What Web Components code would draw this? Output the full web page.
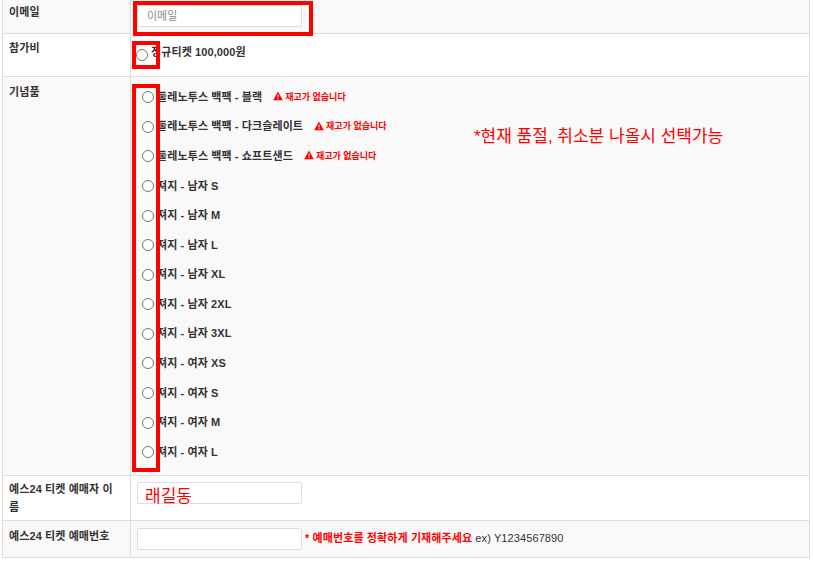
<!DOCTYPE html>
<html lang="ko">
<head>
<meta charset="utf-8">
<title>구매 정보</title>
<style>
  html, body { margin: 0; background: #fff; }
  body {
    font-family: "Liberation Sans", "Noto Sans CJK KR", sans-serif;
    font-size: 11px;
    color: #333;
  }
</style>
</head>
<body>
<order-form>
  <form-row label="이메일" shade style="--h:33px; --lt:3px; --pad:5px 0 0 6px">
    <text-box placeholder="이메일"></text-box>
  </form-row>
  <form-row label="참가비" style="--h:42px; --lt:5px; --pad:2px 0 0 5px; --drop:8px">
    <radio-line>정규티켓 100,000원</radio-line>
  </form-row>
  <form-row label="기념품" shade style="--h:398px; --lt:6px; --pad:4px 0 0 11px">
    <radio-line soldout>둘레노투스 백팩 - 블랙</radio-line>
    <radio-line soldout>둘레노투스 백팩 - 다크슬레이트</radio-line>
    <radio-line soldout>둘레노투스 백팩 - 쇼프트샌드</radio-line>
    <radio-line>져지 - 남자 S</radio-line>
    <radio-line>져지 - 남자 M</radio-line>
    <radio-line>져지 - 남자 L</radio-line>
    <radio-line>져지 - 남자 XL</radio-line>
    <radio-line>져지 - 남자 2XL</radio-line>
    <radio-line>져지 - 남자 3XL</radio-line>
    <radio-line>져지 - 여자 XS</radio-line>
    <radio-line>져지 - 여자 S</radio-line>
    <radio-line>져지 - 여자 M</radio-line>
    <radio-line>져지 - 여자 L</radio-line>
  </form-row>
  <form-row label="예스24 티켓 예매자 이름" style="--h:44px; --lt:4px">
    <text-box></text-box>
  </form-row>
  <form-row label="예스24 티켓 예매번호" shade style="--h:36px; --lt:6px; --pad:7px 0 0 6px">
    <text-box></text-box>
    <ticket-hint></ticket-hint>
  </form-row>

  <red-box slot="marks" style="left:133px; top:1px; width:180px; height:35px"></red-box>
  <red-box slot="marks" style="left:132px; top:41px; width:28px; height:28px"></red-box>
  <red-box slot="marks" style="left:132px; top:84px; width:28px; height:388px"></red-box>
  <red-note slot="marks" style="left:474px; top:127px">*현재 품절, 취소분 나올시 선택가능</red-note>
  <red-note slot="marks" style="left:145px; top:487px">래길동</red-note>
</order-form>

<script>
class OrderForm extends HTMLElement {
  constructor() {
    super();
    this.attachShadow({ mode: 'open' }).innerHTML = `
    <style>
      :host {
        display: block;
        position: relative;
        width: 808px;
        margin-left: 2px;
        border-left: 1px solid #ddd;
        border-right: 1px solid #ddd;
        border-bottom: 1px solid #ddd;
        box-sizing: border-box;
      }
    </style>
    <slot></slot>
    <slot name="marks"></slot>
    `;
  }
}

class FormRow extends HTMLElement {
  constructor() {
    super();
    this.attachShadow({ mode: 'open' }).innerHTML = `
    <style>
      :host {
        display: grid;
        grid-template-columns: 128px 1fr;
        height: var(--h);
        border-bottom: 1px solid #ddd;
        background: #fff;
      }
      :host([shade]) { background: #f9f9f9; }
      :host(:last-of-type) { border-bottom: 0; }
      .label {
        padding: var(--lt, 5px) 12px 0 6px;
        font-weight: bold;
        line-height: 18px;
        letter-spacing: 0.1px;
        border-right: 1px solid #ddd;
      }
      .value {
        padding: var(--pad, 6px 0 0 6px);
        min-width: 0;
      }
    </style>
    <div class="label"></div>
    <div class="value"><slot></slot></div>
    `;
  }

  connectedCallback() {
    this.shadowRoot.querySelector('.label').textContent = this.getAttribute('label');
  }
}

class TextBox extends HTMLElement {
  constructor() {
    super();
    this.attachShadow({ mode: 'open' }).innerHTML = `
    <style>
      :host { display: inline-block; vertical-align: top; }
      input {
        display: block;
        box-sizing: border-box;
        width: 165px;
        height: 22px;
        margin: 0;
        padding: 0 9px;
        border: 1px solid #ddd;
        border-radius: 2px;
        background: #fff;
        font: 11px "Liberation Sans", "Noto Sans CJK KR", sans-serif;
      }
      input::placeholder { color: #8a8a8a; }
    </style>
    <input type="text">
    `;
  }

  connectedCallback() {
    this.shadowRoot.querySelector('input').placeholder = this.getAttribute('placeholder') || '';
  }
}

class RadioLine extends HTMLElement {
  constructor() {
    super();
    this.attachShadow({ mode: 'open' }).innerHTML = `
    <style>
      :host {
        display: flex;
        align-items: center;
        height: 29.58px;
        font-weight: bold;
        letter-spacing: 0.1px;
      }
      input {
        width: 12px;
        height: 12px;
        margin: var(--drop, 3px) 3px 0 0;
        flex: none;
      }
      .out {
        display: none;
        align-items: center;
        gap: 2px;
        margin: 1px 0 0 11px;
        color: #f00;
        font-size: 9px;
        letter-spacing: 0;
      }
      :host([soldout]) .out { display: inline-flex; }
      svg { width: 10px; height: 10px; }
    </style>
    <input type="radio" tabindex="-1">
    <slot></slot>
    <span class="out">
      <svg viewBox="0 0 10 10"><path fill="#f00" d="M5 .6 9.8 9.2H.2z"/><path fill="#fff" d="M4.5 3.6h1v3h-1zM4.5 7.2h1v1h-1z"/></svg>
      재고가 없습니다
    </span>
    `;
  }
}

class TicketHint extends HTMLElement {
  constructor() {
    super();
    this.attachShadow({ mode: 'open' }).innerHTML = `
    <style>
      :host { display: inline-block; margin-left: 0; line-height: 20px; vertical-align: top; letter-spacing: 0.1px; }
      b { color: #f00; }
    </style>
    <b>* 예매번호를 정확하게 기재해주세요</b> ex) Y1234567890
    `;
  }
}

class RedBox extends HTMLElement {
  constructor() {
    super();
    this.attachShadow({ mode: 'open' }).innerHTML = `
    <style>
      :host {
        position: absolute;
        box-sizing: border-box;
        border: 4px solid #f00;
        margin-left: -3px;
        pointer-events: none;
      }
    </style>
    `;
  }
}

class RedNote extends HTMLElement {
  constructor() {
    super();
    this.attachShadow({ mode: 'open' }).innerHTML = `
    <style>
      :host {
        position: absolute;
        margin-left: -3px;
        color: #f00;
        font-size: 17px;
        line-height: 20px;
        white-space: nowrap;
      }
    </style>
    <slot></slot>
    `;
  }
}

customElements.define('order-form', OrderForm);
customElements.define('form-row', FormRow);
customElements.define('text-box', TextBox);
customElements.define('radio-line', RadioLine);
customElements.define('ticket-hint', TicketHint);
customElements.define('red-box', RedBox);
customElements.define('red-note', RedNote);
</script>
</body>
</html>
